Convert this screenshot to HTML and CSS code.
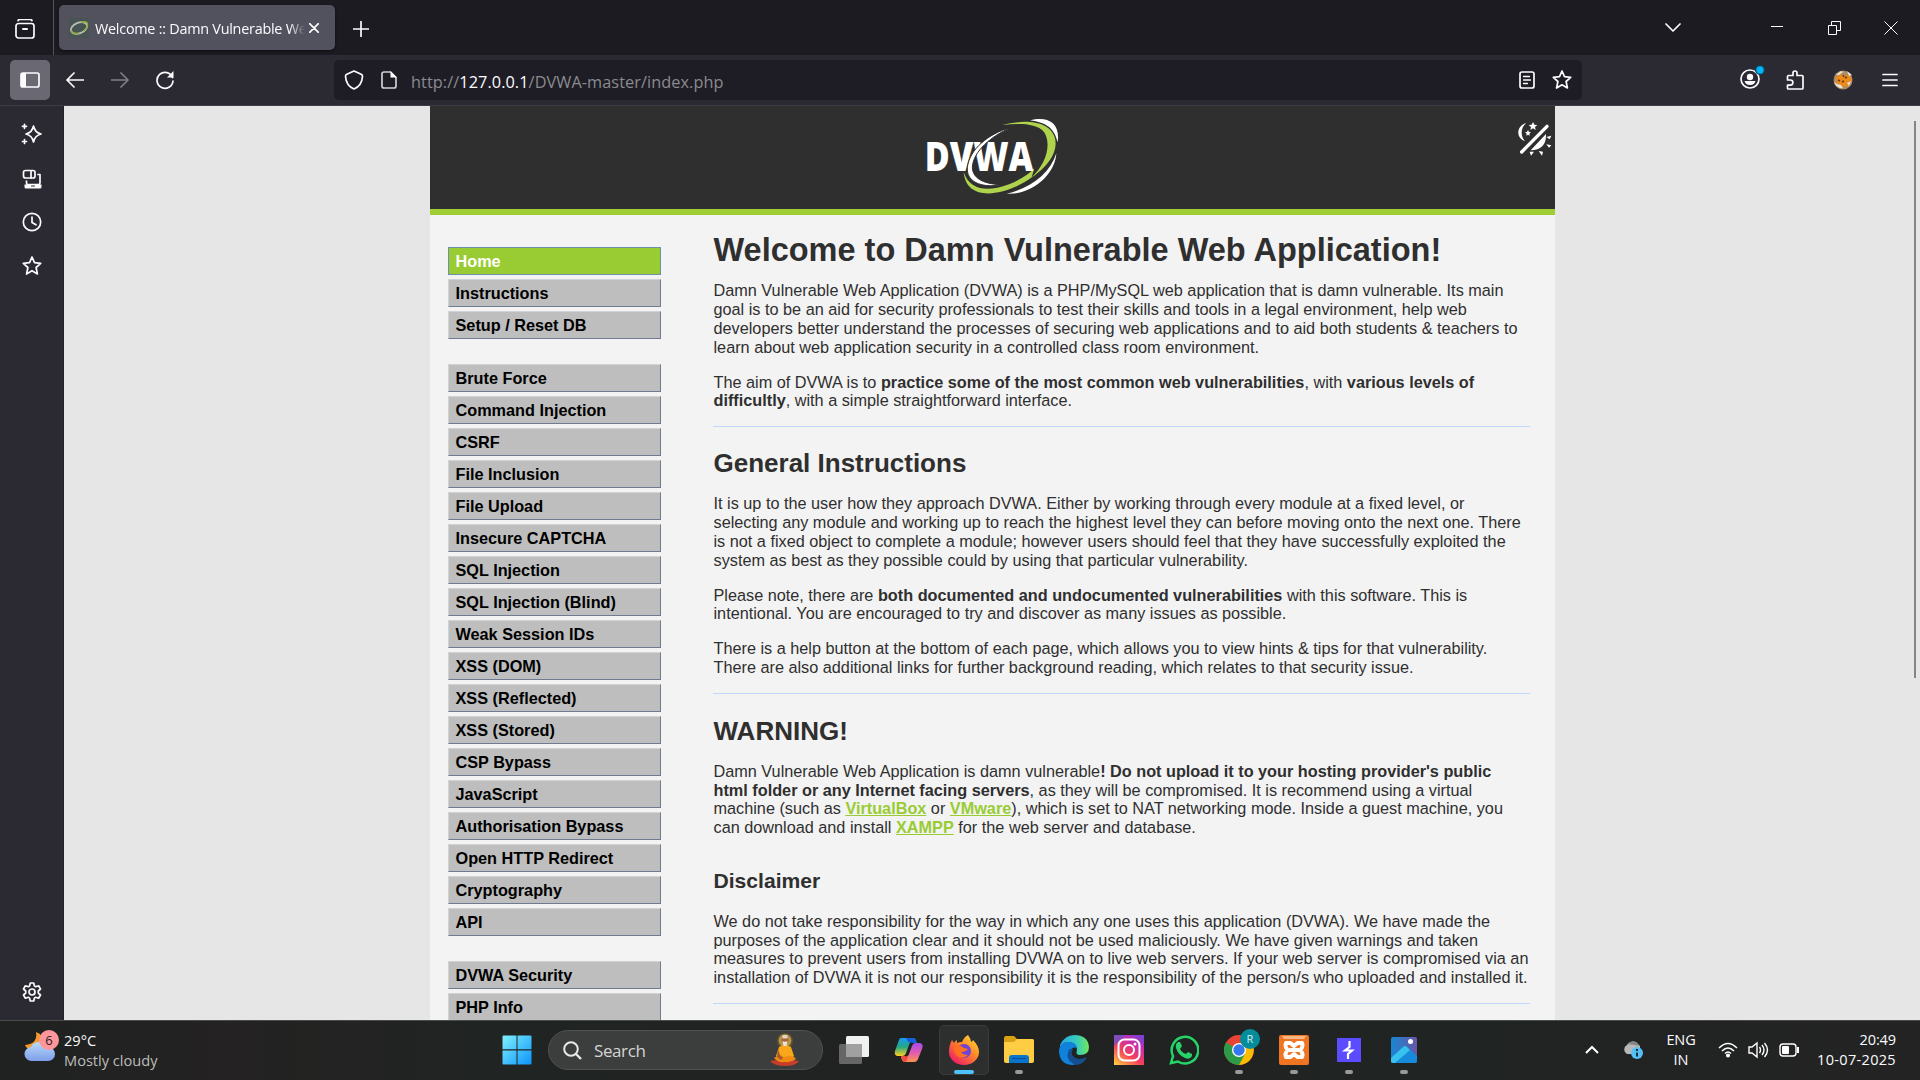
FILE: index.html
```
<!DOCTYPE html>
<html lang="en">
<head>
<meta charset="utf-8">
<title>Welcome :: Damn Vulnerable Web Application</title>
<link rel="stylesheet" href="styles.css">
</head>
<body>
<div class="screen">
  <header class="tabbar">
    <div class="tabview"><svg width="20" height="20" viewBox="0 0 20 20" class="line"><path d="M3 1.5q.5-1 2-1h10q1.500 0 2 1"/><rect x="1" y="4.500" width="18" height="14.500" rx="2.500"/><path d="M8 10h4" stroke-width="2"/></svg></div>
    <div class="tab">
      <svg width="20" height="20" viewBox="0 0 20 20"><rect width="20" height="20" fill="#485451"/><ellipse cx="10" cy="10" rx="8.500" ry="5.300" fill="none" stroke="#b9bdb9" stroke-width="1.800" transform="rotate(-22 10 10)"/><path d="M12 4.500q7-2 6.500 2.500T14 13M2 12q1 5 8 3" fill="none" stroke="#8fac43" stroke-width="1.600"/></svg>
      <span class="tab-title">Welcome :: Damn Vulnerable We</span>
      <svg class="line tab-close" width="10" height="10" viewBox="0 0 10 10"><path d="M.5.5l9 9M9.500.5l-9 9"/></svg>
    </div>
    <svg class="line newtab" width="16" height="16" viewBox="0 0 16 16"><path d="M8 .5v15M.5 8h15"/></svg>
    <div class="window-buttons">
      <svg class="line" width="16" height="16" viewBox="0 0 16 16"><path d="M1 4l7 7 7-7"/></svg>
      <svg class="line thin" width="12" height="14" viewBox="0 0 12 14"><path d="M0 5.500h12"/></svg>
      <svg class="line thin" width="13" height="14" viewBox="0 0 13 14"><path d="M.5 4.500h8v9h-8zM3.500 4.500v-4h9v9h-4"/></svg>
      <svg class="line thin" width="14" height="14" viewBox="0 0 14 14"><path d="M.5.5l13 13M13.500.5l-13 13"/></svg>
    </div>
  </header>
  <nav class="toolbar">
    <div class="side-toggle"><svg width="20" height="16" viewBox="0 0 20 16" class="line"><rect x="1" y="1" width="18" height="14" rx="2"/><path d="M1 1h5v14H1z" fill="#fbfbfe" stroke="none"/></svg></div>
    <svg class="line back" width="18" height="16" viewBox="0 0 18 16"><path d="M8 1L1 8l7 7M1 8h17"/></svg>
    <svg class="line forward" width="18" height="16" viewBox="0 0 18 16"><path d="M10 1l7 7-7 7M17 8H0"/></svg>
    <svg class="line reload" width="20" height="20" viewBox="0 0 20 20"><path d="M17.500 7.500A8 8 0 1 0 18 11"/><path d="M18.500 1v6.500H12z" fill="#fbfbfe" stroke="none"/></svg>
    <div class="urlbar">
      <svg class="line shield" width="20" height="20" viewBox="0 0 20 20"><path d="M10 1l7.200 3.200q1.300.6 1.300 2Q18 15.500 10 19 2 15.500 1.500 6.200q0-1.400 1.300-2z"/></svg>
      <svg class="line file" width="16" height="18" viewBox="0 0 16 18"><path d="M9.500 1H3Q1 1 1 3v12q0 2 2 2h10q2 0 2-2V6.500z" stroke="#cfcfd3"/><path d="M9.500 0v6.500H16z" fill="#fbfbfe" stroke="none"/></svg>
      <span class="url">http://<b>127.0.0.1</b>/DVWA-master/index.php</span>
      <svg class="line" width="16" height="18" viewBox="0 0 16 18"><rect x="1" y="1" width="14" height="16" rx="2"/><path d="M4.500 5.500h6M4.500 9h7M4.500 12.500h4" stroke-width="1.300"/></svg>
      <svg class="line star" width="20" height="20" viewBox="0 0 20 20"><path d="M10 1l2.500 5.700 6.200.6-4.600 4.200 1.300 6.500L10 14.800 4.600 18l1.300-6.500L1.300 7.300l6.200-.6z"/></svg>
    </div>
    <div class="extensions">
      <svg width="26" height="26" viewBox="0 0 26 26"><circle cx="11" cy="14" r="9" class="line"/><circle cx="11" cy="12" r="3.200" fill="#fbfbfe"/><path d="M5.500 16h11q-1 4-5.500 4t-5.500-4" fill="#fbfbfe"/><circle cx="21" cy="5" r="5" fill="#12445f"/><circle cx="21" cy="5" r="3.700" fill="#00b3f4"/></svg>
      <svg class="line puzzle" width="18" height="20" viewBox="0 0 18 20"><path d="M1.500 9V6.500q0-1 1-1H7V3a2 2 0 0 1 4 0v2.500h5q1 0 1 1V18q0 1-1 1H2.500q-1 0-1-1v-2.800h2.800a2.300 2.300 0 0 0 0-5.200H1.500z"/></svg>
      <svg width="20" height="20" viewBox="0 0 20 20"><circle cx="10" cy="10" r="9.500" fill="#ad8d64"/><path d="M3 7l5-3 3 2 6-1 2 5-4 6-6 1-6-5z" fill="#ec8918"/><path d="M1 12q3 7 9 6l-2-3-4-1zM3 5l5-4 2 1-4 3zM14 1l2 5 3-1zM14 13l4-2-2 5z" fill="#e7e3da"/><path d="M5 10l2 1M9 12l2-1M12 8l2-1M10 5l1 2" stroke="#604222" stroke-width="1.500"/></svg>
      <svg class="line" width="16" height="14" viewBox="0 0 16 14"><path d="M1 1.500h14M1 7h14M1 12.500h14"/></svg>
    </div>
  </nav>
  <div class="middle">
    <aside class="sidebar">
      <svg class="line" width="22" height="22" viewBox="0 0 22 22"><path d="M12.500 3q1.300 6.500 7.500 8-6.200 1.500-7.500 8-1.300-6.500-7.500-8 6.200-1.500 7.500-8z"/><path d="M3.500 1.300v4M1.500 3.300h4M3.500 16.500v4M1.500 18.500h4"/></svg>
      <svg class="line" width="20" height="20" viewBox="0 0 20 20"><rect x="1.500" y="1.500" width="11.500" height="7.500" rx="2"/><path d="M9 2v7M4.500 12v2q0 1.500 1.500 1.500h10.500q1.500 0 1.500-1.500V5.500h-2"/><path d="M2.500 15.500h17V18q0 1.500-1.500 1.500H4q-1.500 0-1.500-1.500z" fill="#fbfbfe" stroke="none"/><path d="M9.500 17h3" stroke="#2b2a33" stroke-width="1"/></svg>
      <svg class="line" width="20" height="20" viewBox="0 0 20 20"><circle cx="10" cy="10" r="8.700"/><path d="M10 5v5.500l4 2.300"/></svg>
      <svg class="line" width="20" height="20" viewBox="0 0 20 20"><path d="M10 1l2.500 5.700 6.200.6-4.600 4.200 1.300 6.500L10 14.800 4.600 18l1.300-6.500L1.300 7.300l6.200-.6z"/></svg>
      <svg class="line settings" width="20" height="20" viewBox="0 0 20 20"><circle cx="10" cy="10" r="3"/><path d="M8.300 1h3.400l.7 2.900 1.300.8 2.900-.9 1.900 3.200-2.200 2v2l2.200 2-1.900 3.200-2.900-.9-1.300.8-.7 2.900H8.300l-.7-2.900-1.300-.8-2.900.9L1.500 13l2.200-2V9L1.500 7l1.900-3.200 2.900.9 1.300-.8z"/></svg>
    </aside>
    <main class="viewport">
      <div class="container">
        <div class="banner">
          <svg class="logo" width="136" height="78" viewBox="132 54 408 234">
            <path fill="#fff" d="M450 61C500 48 542 65 533 127 523 85 500 68 450 61zM529 160C526 220 460 286 380 281 455 263 510 220 529 160z"/>
            <path fill="#afd34c" d="M368 75C430 58 510 60 525 115 538 170 480 225 410 259 335 293 257 291 251 216 267 265 310 272 352 263 405 251 445 225 463 205L455 232C500 190 515 130 492 96 468 68 415 70 368 75z"/>
            <text x="134" y="212" textLength="326" lengthAdjust="spacingAndGlyphs" class="logo-text">DVWA</text>
            <path fill="#fff" stroke="#2f2f2f" stroke-width="3" d="M392 83C335 108 279 153 277 203 279 239 318 253 366 254 300 266 259 243 262 203 267 150 325 100 392 83z"/>
          </svg>
          <svg class="theme" width="36" height="36" viewBox="0 0 108 108" fill="#fff"><path d="M28 3C-5 13-2 51 24 57 10 43 10 17 28 3zM48 0l4 8 9 1-7 6 2 9-8-5-8 5 2-9-7-6 9-1zM33 24l3 6 6 1-5 4 1 6-5-3-5 3 1-6-5-4 6-1zM87 36Q89 84 41 85zM88 45l15-4-5 11zM88 67l15 3-7 7zM65 87l13 2-3 12zM38 89h13l-9 12z"/><path d="M14 90L90 13" stroke="#fff" stroke-width="10" stroke-linecap="round"/></svg>
        </div>
        <div class="page">
          <div class="menu">
            <ul><li class="selected">Home</li><li>Instructions</li><li>Setup / Reset DB</li></ul>
            <ul><li>Brute Force</li><li>Command Injection</li><li>CSRF</li><li>File Inclusion</li><li>File Upload</li><li>Insecure CAPTCHA</li><li>SQL Injection</li><li>SQL Injection (Blind)</li><li>Weak Session IDs</li><li>XSS (DOM)</li><li>XSS (Reflected)</li><li>XSS (Stored)</li><li>CSP Bypass</li><li>JavaScript</li><li>Authorisation Bypass</li><li>Open HTTP Redirect</li><li>Cryptography</li><li>API</li></ul>
            <ul><li>DVWA Security</li><li>PHP Info</li></ul>
          </div>
          <article class="content">
            <h1>Welcome to Damn Vulnerable Web Application!</h1>
            <p>Damn Vulnerable Web Application (DVWA) is a PHP/MySQL web application that is damn vulnerable. Its main<br>goal is to be an aid for security professionals to test their skills and tools in a legal environment, help web<br>developers better understand the processes of securing web applications and to aid both students &amp; teachers to<br>learn about web application security in a controlled class room environment.</p>
            <p>The aim of DVWA is to <b>practice some of the most common web vulnerabilities</b>, with <b>various levels of<br>difficultly</b>, with a simple straightforward interface.</p>
            <hr>
            <h2>General Instructions</h2>
            <p>It is up to the user how they approach DVWA. Either by working through every module at a fixed level, or<br>selecting any module and working up to reach the highest level they can before moving onto the next one. There<br>is not a fixed object to complete a module; however users should feel that they have successfully exploited the<br>system as best as they possible could by using that particular vulnerability.</p>
            <p>Please note, there are <b>both documented and undocumented vulnerabilities</b> with this software. This is<br>intentional. You are encouraged to try and discover as many issues as possible.</p>
            <p>There is a help button at the bottom of each page, which allows you to view hints &amp; tips for that vulnerability.<br>There are also additional links for further background reading, which relates to that security issue.</p>
            <hr>
            <h2 class="warning">WARNING!</h2>
            <p>Damn Vulnerable Web Application is damn vulnerable<b>! Do not upload it to your hosting provider's public<br>html folder or any Internet facing servers</b>, as they will be compromised. It is recommend using a virtual<br>machine (such as <a>VirtualBox</a> or <a>VMware</a>), which is set to NAT networking mode. Inside a guest machine, you<br>can download and install <a>XAMPP</a> for the web server and database.</p>
            <h3>Disclaimer</h3>
            <p>We do not take responsibility for the way in which any one uses this application (DVWA). We have made the<br>purposes of the application clear and it should not be used maliciously. We have given warnings and taken<br>measures to prevent users from installing DVWA on to live web servers. If your web server is compromised via an<br>installation of DVWA it is not our responsibility it is the responsibility of the person/s who uploaded and installed it.</p>
            <hr>
          </article>
        </div>
      </div>
      <div class="scroll-thumb"></div>
    </main>
  </div>
  <footer class="taskbar">
    <div class="weather">
      <svg width="36" height="38" viewBox="0 0 36 38"><defs><linearGradient id="cl" x2="0" y2="1"><stop stop-color="#b9dafa"/><stop offset="1" stop-color="#7d9fea"/></linearGradient></defs><path d="M13 7q2 12-11 13 2 6 11 5l8-6-4-10z" fill="#f39a2d"/><path d="M9 36a7 7 0 0 1-1-14q2-5 8-5 7 0 9 5a7 7 0 0 1 0 14z" fill="url(#cl)"/></svg>
      <span class="badge">6</span>
      <div><div class="temp">29°C</div><div class="cond">Mostly cloudy</div></div>
    </div>
    <svg class="start" width="30" height="30" viewBox="0 0 30 30"><defs><linearGradient id="wi" x2="1" y2="1"><stop stop-color="#80f0fc"/><stop offset="1" stop-color="#0b94fb"/></linearGradient></defs><path d="M1.500.5h13v13.800H.5V1.500q0-1 1-1zM15.500.5h13q1 0 1 1v12.800h-14zM.5 15.500h14v14h-13q-1 0-1-1zM15.500 15.500h14v13q0 1-1 1h-13z" fill="url(#wi)"/></svg>
    <div class="search">
      <svg width="19" height="19" viewBox="0 0 19 19" fill="none" stroke="#e8e8e8" stroke-width="2"><circle cx="8" cy="8" r="6.800"/><path d="M13 13l5 5" stroke-width="2.400"/></svg>
      <span>Search</span>
      <svg class="guru" width="30" height="34" viewBox="0 0 30 34"><circle cx="15" cy="8" r="8" fill="#5f5330"/><circle cx="15" cy="7.500" r="6.300" fill="#b99746"/><path d="M0 28q15-3 29 0-3 5-14 5T0 28z" fill="#c63d29"/><path d="M9 14q6-4 12 0l3 9-4 4H9l-3-4z" fill="#f9a61b"/><path d="M4 25q5-4 11-1 8-3 11 2-5 4-11 3-7 1-11-4z" fill="#ef8a12"/><circle cx="15" cy="7" r="3.500" fill="#a2633f"/><path d="M12.500 8q2.500 1.500 5 0l-1 5h-3z" fill="#eee3da"/><path d="M12.500 2h5v3.500h-5z" fill="#dfd6c5"/><path d="M8 16l-1 8 4 3 2-2-3-3z" fill="#a35a2c"/></svg>
    </div>
    <div class="apps">
      <div class="app"><svg width="30" height="28" viewBox="0 0 30 28"><rect x="7" width="23" height="21" rx="1.500" fill="#f0f0f0"/><rect y="8" width="23" height="20" rx="1.500" fill="#666"/><path d="M7 8h16v13H7z" fill="#a0a0a0"/></svg></div>
      <div class="app"><svg width="30" height="30" viewBox="0 0 30 30"><defs><linearGradient id="c1" x2="0" y2="1"><stop stop-color="#179cf0"/><stop offset=".5" stop-color="#25a785"/><stop offset="1" stop-color="#ffd21c"/></linearGradient><linearGradient id="c2" x2="0" y2="1"><stop stop-color="#a64bea"/><stop offset=".5" stop-color="#e05cb0"/><stop offset="1" stop-color="#ff934e"/></linearGradient></defs><path d="M7 3h12q3 0 3 4l-3-1q-3 0-4 4l-3 8q-1 3-4 3H3q-3-1-2-5L5 5q.5-2 2-2z" fill="url(#c1)"/><path d="M12 3h7q3 0 4 5h-4q-3-1-5-1z" fill="#165fda"/><path d="M22 8h4q4 1 2 6l-4 10q-1 3-4 3H11q-3 0-4-5h4q3 0 4-3l3-8q1-3 4-3z" fill="url(#c2)"/><path d="M7 21h4l3 1-2 5Q8 27 7 21z" fill="#f24b3e"/></svg></div>
      <div class="app active"><svg width="30" height="30" viewBox="0 0 30 30"><defs><linearGradient id="fx" x1="1" x2=".2" y2="1"><stop stop-color="#ffec43"/><stop offset=".45" stop-color="#ff8d25"/><stop offset="1" stop-color="#ee1769"/></linearGradient></defs><path d="M19 0q3 4 3 7 2-1 2-2 6 6 6 12a15 13 0 0 1-30 0Q0 10 3 5l2 3q1-2 3-3v3q2-1 5-1 2-5 6-7z" fill="url(#fx)"/><circle cx="15" cy="16" r="7" fill="#7043d8"/><path d="M5 11q6-2 10 2l4 1q-2 3-7 3 2 3 7 3-4 4-9 2-6-3-5-11z" fill="#ff7020"/></svg></div>
      <div class="app run"><svg width="30" height="28" viewBox="0 0 30 28"><path d="M0 2q0-2 2-2h8l3 3h15q2 0 2 2v8H0z" fill="#dba114"/><path d="M0 6h10l3-3h15q2 0 2 2v20q0 2-2 2H2q-2 0-2-2z" fill="#ffcd43"/><path d="M5 27v-5q0-3 3-3h14q3 0 3 3v5z" fill="#0874cb"/><path d="M8 22.500h14" stroke="#064e98"/></svg></div>
      <div class="app"><svg width="30" height="30" viewBox="0 0 30 30"><defs><linearGradient id="e1" x2="1"><stop stop-color="#25a7e8"/><stop offset=".6" stop-color="#39cdbb"/><stop offset="1" stop-color="#71e65a"/></linearGradient></defs><path d="M1 10Q6 0 15 0q14 0 15 12 0 8-9 8-5 0-3-5 0-7-8-8-6 0-9 5z" fill="url(#e1)"/><path d="M0 15Q2 6 10 7q7 0 8 6-6-2-6 5 1 7 9 8-4 4-8 4Q0 29 0 15z" fill="#1082db"/><path d="M10 15q-5 10 7 15 8-1 11-8-8 4-13 0-4-3-1-8-3-1-4 1z" fill="#154f91"/></svg></div>
      <div class="app"><svg width="30" height="30" viewBox="0 0 30 30"><defs><linearGradient id="ig" x1=".1" y1="1" x2=".8" y2="0"><stop stop-color="#ffc641"/><stop offset=".4" stop-color="#f5415a"/><stop offset=".75" stop-color="#c82dae"/><stop offset="1" stop-color="#7e3fd4"/></linearGradient></defs><path d="M0 0h30v30H0z" fill="url(#ig)"/><path d="M0 0h12L0 11z" fill="#5158d2" opacity=".65"/><g fill="none" stroke="#fff" stroke-width="2"><rect x="4.500" y="4.500" width="21" height="21" rx="6"/><circle cx="15" cy="15" r="5"/></g><circle cx="21" cy="9" r="1.500" fill="#fff"/></svg></div>
      <div class="app"><svg width="30" height="30" viewBox="0 0 30 30"><path d="M2 28l2-7A13.300 13.300 0 1 1 9 26.500z" fill="none" stroke="#25d366" stroke-width="2.500"/><path d="M9 7h2l2 4-2 3q2 4 6 5l2-2 4 2v2q-2 4-7 2Q9 20 7 13q-1-4 2-6z" fill="#25d366"/></svg></div>
      <div class="app run"><svg width="36" height="36" viewBox="0 0 36 36" class="chrome-icon"><circle cx="15" cy="21" r="15" fill="#ea4335"/><path d="M2 13.500A15 15 0 0 0 15 36l7-11z" fill="#2c9b48"/><path d="M15 36A15 15 0 0 0 28 14H15l6 11z" fill="#fbbc04"/><circle cx="15" cy="21" r="7" fill="#fff"/><circle cx="15" cy="21" r="5.700" fill="#3478ec"/><circle cx="26" cy="10" r="10" fill="#048c9b"/><text x="26" y="14" text-anchor="middle" class="avatar">R</text></svg></div>
      <div class="app run"><svg width="30" height="30" viewBox="0 0 30 30"><rect width="30" height="30" rx="2" fill="#ef7522"/><path d="M3 1h24l-2 3H5z" fill="#f6b785"/><path d="M7 8h4.500L15 11l3.500-3H23q1.500 3-1.500 7 3 4 1.500 7h-4.500L15 19l-3.500 3H7q-1.500-3 1.500-7-3-4-1.500-7zM10 15h10" fill="none" stroke="#fff" stroke-width="4" stroke-linejoin="round"/></svg></div>
      <div class="app run"><svg width="24" height="24" viewBox="0 0 24 24"><path d="M0 0h24v24H0z" fill="#5b4cff"/><path d="M12.500 3v6L8 12.500h7L11 16v5" fill="none" stroke="#fff" stroke-width="2.200"/></svg></div>
      <div class="app run"><svg width="26" height="26" viewBox="0 0 26 26"><defs><linearGradient id="ph" x2="1"><stop stop-color="#1787d5"/><stop offset="1" stop-color="#6857a5"/></linearGradient></defs><rect width="26" height="26" rx="2" fill="url(#ph)"/><path d="M0 21L12 10q2-2 4 0l10 9v5q0 2-2 2H2q-2 0-2-2z" fill="#168bdc"/><path d="M0 21L12 10q2-2 4 0l3 3L4 26H2q-2 0-2-2z" fill="#37c2ee"/><circle cx="19.500" cy="4.500" r="2.500" fill="#fff"/></svg></div>
    </div>
    <div class="tray">
      <svg width="14" height="10" viewBox="0 0 14 10" fill="none" stroke="#fff" stroke-width="2"><path d="M1 8l6-6 6 6"/></svg>
      <svg class="cloud" width="22" height="18" viewBox="0 0 22 18"><path d="M5 13a5 5 0 0 1 0-9q4-5 9-3l4 4v8z" fill="#b8b8b8"/><path d="M5 3q4-4 9-2 3 2 3 4l-4-1z" fill="#858585"/><circle cx="15" cy="12" r="6" fill="#55bff5"/><path d="M15 8v2M15 11.500v4" stroke="#123" stroke-width="1.800"/></svg>
      <div class="lang">ENG<br>IN</div>
      <svg width="20" height="16" viewBox="0 0 20 16" fill="none" stroke="#fff" stroke-width="1.500"><path d="M1 6q9-9 18 0M4 9q6-6 12 0M7 11.500q3-3 6 0"/><circle cx="10" cy="13.500" r="1.300" fill="#fff"/></svg>
      <svg width="21" height="18" viewBox="0 0 21 18" fill="none" stroke="#fff" stroke-width="1.400"><path d="M1 6h3l5-4v14l-5-4H1zM11.500 6q2 3 0 6M14 4q4 5 0 10M16.500 2q6 7 0 14"/></svg>
      <svg width="21" height="14" viewBox="0 0 21 14"><rect x="1" y="1" width="16" height="12" rx="3" fill="none" stroke="#fff" stroke-width="1.400"/><rect x="3" y="3" width="7" height="8" rx="1" fill="#fff"/><path d="M19 4v6" stroke="#fff" stroke-width="2"/></svg>
      <div class="clock">20:49<br><span class="date">10-07-2025</span></div>
    </div>
  </footer>
</div>
</body>
</html>
```
FILE: styles.css
```
* { box-sizing: border-box; }
body { margin: 0; overflow: hidden; }
svg { display: block; flex: none; }
.screen { width: 1920px; height: 1080px; display: flex; flex-direction: column; font-family: "Open Sans", "Noto Sans", sans-serif; color: #fbfbfe; background: #2b2a33; overflow: hidden; }
.line { fill: none; stroke: #fbfbfe; stroke-width: 1.7; stroke-linejoin: round; stroke-linecap: round; }
.thin { stroke-width: 1; stroke-linejoin: miter; stroke-linecap: butt; }

.tabbar { height: 55px; flex: none; background: #1c1b22; display: flex; align-items: center; }
.tabview { width: 54px; height: 55px; border-right: 1px solid #53525a; padding: 19px 0 0 15px; }
.tab { width: 276px; height: 45px; margin-left: 5px; padding: 0 15px 0 10px; border-radius: 5px; background: #52515e; box-shadow: 0 1px 3px #0008; display: flex; align-items: center; }
.tab-title { width: 212px; margin: 2px 0 0 6px; font-size: 14.4px; letter-spacing: -.25px; white-space: nowrap; -webkit-mask-image: linear-gradient(90deg, #000 92%, transparent 99%); mask-image: linear-gradient(90deg, #000 92%, transparent 99%); }
.tab-close { margin-left: 2px; }
.newtab { margin: 2px 0 0 18px; }
.window-buttons { margin-left: auto; padding-right: 22px; display: flex; align-items: center; }
.window-buttons svg:nth-child(2) { margin-left: 90px; }
.window-buttons svg:nth-child(3) { margin-left: 45px; }
.window-buttons svg:nth-child(4) { margin-left: 43px; }

.toolbar { height: 51px; flex: none; display: flex; align-items: center; padding: 0 22px 0 10px; border-bottom: 1px solid #3d3c45; }
.side-toggle { width: 40px; height: 40px; border-radius: 5px; background: #6a6973; display: grid; place-items: center; }
.back { margin-left: 16px; }
.forward { margin-left: 27px; opacity: .4; }
.reload { margin-left: 26px; }
.urlbar { width: 1248px; height: 40px; margin-left: 159px; padding: 0 10px; border-radius: 5px; background: #1e1d25; display: flex; align-items: center; }
.file { margin-left: 17px; }
.url { flex: 1; margin: 3px 0 0 14px; font-size: 16.3px; letter-spacing: .07px; color: #8b8a90; }
.url b { font-weight: 400; color: #fbfbfe; }
.star { margin-left: 17px; }
.extensions { margin-left: auto; display: flex; align-items: center; }
.extensions svg:nth-child(1) { margin-bottom: 4px; }
.extensions svg:nth-child(2) { margin-left: 21px; }
.extensions svg:nth-child(3) { margin-left: 29px; }
.extensions svg:nth-child(4) { margin-left: 29px; }

.middle { height: 914px; flex: none; display: flex; }
.sidebar { width: 64px; border-right: 1px solid #232229; padding: 17px 0 18px; display: flex; flex-direction: column; align-items: center; gap: 23.6px; }
.settings { margin-top: auto; }
.viewport { flex: 1; position: relative; background: #e6e6e6; overflow: hidden; padding-left: 366px; font-family: Arial, "Liberation Sans", sans-serif; }
.container { width: 1125px; height: 914px; background: #f3f3f3; }
.banner { height: 109px; background: #2f2f2f; border-bottom: 6px solid #a0cd33; display: flex; align-items: flex-start; padding: 12px 0 0 494px; }
.logo-text { font: 800 122px "Open Sans", sans-serif; fill: #fff; }
.theme { margin: 4px 0 0 457px; }
.page { display: flex; }
.menu { width: 231px; padding: 32px 0 0 18px; }
.menu ul { list-style: none; margin: 0 0 25px; padding: 0; display: flex; flex-direction: column; gap: 4px; }
.menu li { height: 28px; padding-left: 6.5px; border: 1px solid; border-color: #d0d2d3 #6e7b91 #6e7b91 #d0d2d3; background: #bebebe; color: #000; font-weight: 700; font-size: 16.25px; line-height: 26px; white-space: nowrap; }
.menu .selected { background: #9c3; border-color: #6e8eae; color: #fff; }
.content { width: 817px; margin-left: 52px; padding-top: 15px; color: #2f2f2f; font-size: 16.25px; line-height: 18.75px; white-space: nowrap; }
.content > :not(hr) { padding-left: .5px; }
h1 { margin: 0 0 11.25px; font-size: 32.5px; line-height: 40px; }
p { margin: 0 0 16.25px; }
hr { margin: 0; height: 1px; border: 0; background: #c0d5ff; }
h2 { margin: 0; padding-top: 19.5px; height: 67px; font-size: 26px; line-height: 32px; }
.warning { padding-top: 20.5px; height: 67.75px; }
h3 { margin: 0; padding-top: 14px; height: 58.75px; font-size: 21.125px; line-height: 28px; }
a { color: #9c3; font-weight: 700; text-decoration: underline; }
.scroll-thumb { position: absolute; right: 4px; top: 15px; width: 2px; height: 557px; background: #858585; }

.taskbar { height: 60px; flex: none; border-top: 1px solid #4a4c4b; padding-bottom: 1px; background: linear-gradient(90deg, #1f2221, #242222 12%, #202422 25%, #202221 50%, #202422 75%, #232323); display: flex; align-items: center; }
.weather { position: relative; width: 479px; padding-left: 23px; display: flex; align-items: center; gap: 5px; font-size: 14.6px; line-height: 20px; }
.weather svg { margin-top: -12px; }
.weather > div { margin-top: -1px; }
.badge { position: absolute; left: 39px; top: -1px; width: 20px; height: 20px; border-radius: 50%; background: #ff969c; color: #222; text-align: center; font-size: 13px; line-height: 20px; }
.cond { color: #bcbdbc; }
.start { margin-left: 23px; }
.search { width: 275px; height: 40px; margin-left: 16px; padding: 0 22px 0 14px; display: flex; align-items: center; border: 1px solid #505151; border-radius: 20px; background: #3c3e3d; color: #d5d5d5; font-size: 17px; letter-spacing: -.4px; }
.search span { margin-left: 12px; }
.guru { margin-left: auto; }
.apps { display: flex; gap: 5px; margin-left: 6px; }
.app { position: relative; width: 50px; height: 50px; display: grid; place-items: center; border-radius: 5px; }
.active { background: #2d2e2e; border: 1px solid #393a3a; }
.active::after, .run::after { content: ""; position: absolute; left: 21px; bottom: 1px; width: 8px; height: 4px; border-radius: 2px; background: #999; }
.active::after { left: 14px; width: 20px; bottom: 0; background: #4cc2ff; }
.chrome-icon { margin: -6px 0 0 6px; }
.avatar { font: 11px "Open Sans", sans-serif; fill: #d5eef0; }
.tray { margin-left: auto; padding-right: 24px; display: flex; align-items: center; font-size: 14.5px; line-height: 20px; letter-spacing: -.1px; }
.cloud { margin-left: 23px; }
.lang { width: 40px; margin: -1px 17px 0; text-align: center; }
.tray svg:nth-child(5), .tray svg:nth-child(6) { margin-left: 10px; }
.clock { width: 92px; margin: -1px 0 0 4px; text-align: right; }
.date { letter-spacing: .33px; }
```
